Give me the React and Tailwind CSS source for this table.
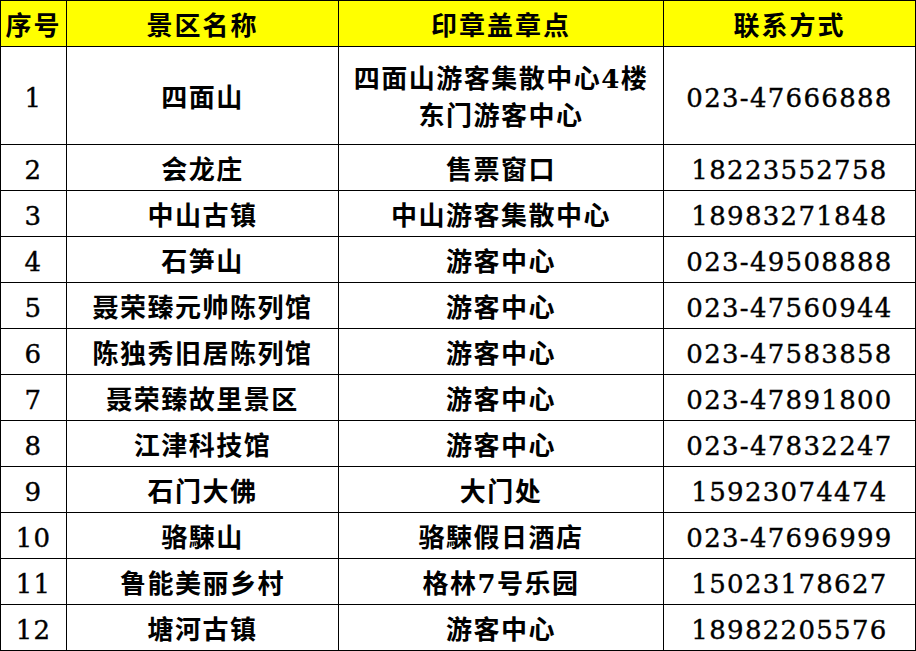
import React from 'react'

const rows = [
    { no: '1', name: '四面山', spot: ['四面山游客集散中心4楼', '东门游客中心'], tel: '023-47666888' },
    { no: '2', name: '会龙庄', spot: ['售票窗口'], tel: '18223552758' },
    { no: '3', name: '中山古镇', spot: ['中山游客集散中心'], tel: '18983271848' },
    { no: '4', name: '石笋山', spot: ['游客中心'], tel: '023-49508888' },
    { no: '5', name: '聂荣臻元帅陈列馆', spot: ['游客中心'], tel: '023-47560944' },
    { no: '6', name: '陈独秀旧居陈列馆', spot: ['游客中心'], tel: '023-47583858' },
    { no: '7', name: '聂荣臻故里景区', spot: ['游客中心'], tel: '023-47891800' },
    { no: '8', name: '江津科技馆', spot: ['游客中心'], tel: '023-47832247' },
    { no: '9', name: '石门大佛', spot: ['大门处'], tel: '15923074474' },
    { no: '10', name: '骆駷山', spot: ['骆駷假日酒店'], tel: '023-47696999' },
    { no: '11', name: '鲁能美丽乡村', spot: ['格林7号乐园'], tel: '15023178627' },
    { no: '12', name: '塘河古镇', spot: ['游客中心'], tel: '18982205576' },
]

const cjk = "font-['DejaVu_Serif','Noto_Sans_CJK_SC',serif] font-bold text-[26px] tracking-[1.5px]"
const num = "font-['DejaVu_Serif',serif] text-[26px] tracking-[1.3px] [-webkit-text-stroke:0.4px_black]"
const cell = 'border-r border-b border-black flex items-center justify-center text-center text-black pt-[5px]'

const App = () => {
    return (
        <div className="w-[916px] h-[651px] bg-white">
            <div className="grid grid-cols-[66px_272px_325px_252px] border-l border-t border-black">
                <div className={`${cell} ${cjk} h-[46px] bg-[#ffff00] tracking-[2px]`}>序号</div>
                <div className={`${cell} ${cjk} h-[46px] bg-[#ffff00] tracking-[2px]`}>景区名称</div>
                <div className={`${cell} ${cjk} h-[46px] bg-[#ffff00] tracking-[2px]`}>印章盖章点</div>
                <div className={`${cell} ${cjk} h-[46px] bg-[#ffff00] tracking-[2px]`}>联系方式</div>
                {rows.map((r) => {
                    const h = r.spot.length > 1 ? 'h-[98px]' : 'h-[46px]'
                    return (
                        <React.Fragment key={r.no}>
                            <div className={`${cell} ${num} ${h}`}>{r.no}</div>
                            <div className={`${cell} ${cjk} ${h}`}>{r.name}</div>
                            <div className={`${cell} ${cjk} ${h} flex-col leading-[37px]`}>
                                {r.spot.map((s) => <div key={s}>{s}</div>)}
                            </div>
                            <div className={`${cell} ${num} ${h}`}>{r.tel}</div>
                        </React.Fragment>
                    )
                })}
            </div>
        </div>
    )
}

export default App
